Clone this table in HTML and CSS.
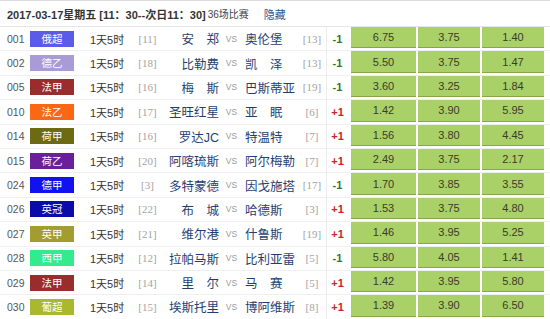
FILE: index.html
```html
<!DOCTYPE html>
<html lang="zh">
<head>
<meta charset="utf-8">
<link rel="stylesheet" href="styles.css">
</head>
<body>
<div class="board">
  <div class="head">
    <span class="date">2017-03-17星期五&nbsp;[11：30--次日11：30]</span>
    <span class="count">36场比赛</span>
    <span class="hide">隐藏</span>
  </div>

  <div class="row"><span class="num">001</span><span class="lg lg-ruc">俄超</span><span class="time">1天5时</span><span class="rk">[11]</span><span class="home">安　郑</span><span class="vs">VS</span><span class="away">奥伦堡</span><span class="rk">[13]</span><span class="hc neg">-1</span><span class="od">6.75</span><span class="od">3.75</span><span class="od">1.40</span></div>
  <div class="row"><span class="num">002</span><span class="lg lg-de2">德乙</span><span class="time">1天5时</span><span class="rk">[18]</span><span class="home">比勒费</span><span class="vs">VS</span><span class="away">凯　泽</span><span class="rk">[13]</span><span class="hc neg">-1</span><span class="od">5.50</span><span class="od">3.75</span><span class="od">1.47</span></div>
  <div class="row"><span class="num">005</span><span class="lg lg-fr1">法甲</span><span class="time">1天5时</span><span class="rk">[16]</span><span class="home">梅　斯</span><span class="vs">VS</span><span class="away">巴斯蒂亚</span><span class="rk">[19]</span><span class="hc neg">-1</span><span class="od">3.60</span><span class="od">3.25</span><span class="od">1.84</span></div>
  <div class="row"><span class="num">010</span><span class="lg lg-fr2">法乙</span><span class="time">1天5时</span><span class="rk">[17]</span><span class="home">圣旺红星</span><span class="vs">VS</span><span class="away">亚　眠</span><span class="rk">[6]</span><span class="hc pos">+1</span><span class="od">1.42</span><span class="od">3.90</span><span class="od">5.95</span></div>
  <div class="row"><span class="num">014</span><span class="lg lg-nl1">荷甲</span><span class="time">1天5时</span><span class="rk">[16]</span><span class="home">罗达JC</span><span class="vs">VS</span><span class="away">特温特</span><span class="rk">[7]</span><span class="hc pos">+1</span><span class="od">1.56</span><span class="od">3.80</span><span class="od">4.45</span></div>
  <div class="row"><span class="num">015</span><span class="lg lg-nl2">荷乙</span><span class="time">1天5时</span><span class="rk">[20]</span><span class="home">阿喀琉斯</span><span class="vs">VS</span><span class="away">阿尔梅勒</span><span class="rk">[7]</span><span class="hc pos">+1</span><span class="od">2.49</span><span class="od">3.75</span><span class="od">2.17</span></div>
  <div class="row"><span class="num">024</span><span class="lg lg-de1">德甲</span><span class="time">1天5时</span><span class="rk">[3]</span><span class="home">多特蒙德</span><span class="vs">VS</span><span class="away">因戈施塔</span><span class="rk">[17]</span><span class="hc neg">-1</span><span class="od">1.70</span><span class="od">3.85</span><span class="od">3.55</span></div>
  <div class="row"><span class="num">026</span><span class="lg lg-ech">英冠</span><span class="time">1天5时</span><span class="rk">[22]</span><span class="home">布　城</span><span class="vs">VS</span><span class="away">哈德斯</span><span class="rk">[3]</span><span class="hc pos">+1</span><span class="od">1.53</span><span class="od">3.75</span><span class="od">4.80</span></div>
  <div class="row"><span class="num">027</span><span class="lg lg-el1">英甲</span><span class="time">1天5时</span><span class="rk">[21]</span><span class="home">维尔港</span><span class="vs">VS</span><span class="away">什鲁斯</span><span class="rk">[19]</span><span class="hc pos">+1</span><span class="od">1.46</span><span class="od">3.95</span><span class="od">5.25</span></div>
  <div class="row"><span class="num">028</span><span class="lg lg-es1">西甲</span><span class="time">1天5时</span><span class="rk">[12]</span><span class="home">拉帕马斯</span><span class="vs">VS</span><span class="away">比利亚雷</span><span class="rk">[5]</span><span class="hc neg">-1</span><span class="od">5.80</span><span class="od">4.05</span><span class="od">1.41</span></div>
  <div class="row"><span class="num">029</span><span class="lg lg-fr1">法甲</span><span class="time">1天5时</span><span class="rk">[14]</span><span class="home">里　尔</span><span class="vs">VS</span><span class="away">马　赛</span><span class="rk">[5]</span><span class="hc pos">+1</span><span class="od">1.42</span><span class="od">3.95</span><span class="od">5.80</span></div>
  <div class="row"><span class="num">030</span><span class="lg lg-pt1">葡超</span><span class="time">1天5时</span><span class="rk">[15]</span><span class="home">埃斯托里</span><span class="vs">VS</span><span class="away">博阿维斯</span><span class="rk">[8]</span><span class="hc pos">+1</span><span class="od">1.39</span><span class="od">3.90</span><span class="od">6.50</span></div>
</div>
</body>
</html>
```

FILE: styles.css
```css
html, body {
  margin: 0;
  padding: 0;
  background: #fff;
}

.board {
  width: 550px;
  font-family: "Liberation Sans", "Noto Sans CJK SC", sans-serif;
  color: #333;
}

.head {
  border-top: 1px solid #dcdcdc;
  border-bottom: 1px solid #e6e6e6;
  display: flex;
  align-items: center;
  padding-left: 7px;
  box-sizing: border-box;
  height: 27px;
}

.date {
  font-size: 11px;
  font-weight: bold;
  color: #333;
}

.count {
  font-size: 10px;
  color: #444;
  margin-left: 2px;
}

.hide {
  font-size: 11px;
  color: #2a5592;
  margin-left: 15px;
}

.row {
  height: 24.4px;
  display: grid;
  grid-template-columns: 30px 44px 56px 35px 54px 25px 54px 28px 25px 67px 64px 64px;
  align-items: center;
  box-sizing: border-box;
  border-bottom: 1px solid #efefef;
  font-size: 10.5px;
}

.num {
  padding-left: 7px;
  color: #555;
  font-size: 10.5px;
}

.lg {
  height: 16px;
  line-height: 16px;
  color: #fff;
  text-align: center;
  font-size: 10.5px;
}

.lg-ruc { background: #5b5bea; }
.lg-de2 { background: #a99ad8; }
.lg-fr1 { background: #9a2c2c; }
.lg-fr2 { background: #fb6814; }
.lg-nl1 { background: #6c6a12; }
.lg-nl2 { background: #6a209a; }
.lg-de1 { background: #1212ee; }
.lg-ech { background: #0b0baa; }
.lg-el1 { background: #a39c2e; }
.lg-es1 { background: #33ea8c; }
.lg-pt1 { background: #a9b82c; }

.time {
  padding-left: 16px;
  color: #333;
  font-size: 11px;
}

.rk {
  text-align: center;
  color: #a3a3a3;
  font-family: "Liberation Serif", "Noto Sans CJK SC", serif;
  font-size: 11px;
}

.home, .away {
  color: #1f3f72;
  font-size: 12.5px;
  white-space: nowrap;
}

.home {
  text-align: right;
}

.away {
  text-align: left;
  padding-left: 1px;
}

.vs {
  text-align: center;
  color: #9a9a9a;
  font-size: 8.5px;
}

.hc {
  align-self: stretch;
  display: flex;
  align-items: center;
  justify-content: center;
  border-left: 1px solid #ececec;
  font-weight: bold;
  font-size: 11px;
  padding-right: 3px;
}

.neg { color: #2d7a2d; }
.pos { color: #c9252a; }

.od {
  align-self: stretch;
  margin: 0 2px 2px 0;
  background: #aad168;
  border-bottom: 1px solid #86a64c;
  display: flex;
  align-items: center;
  justify-content: center;
  color: #3b3b2b;
  font-size: 11px;
}
```
